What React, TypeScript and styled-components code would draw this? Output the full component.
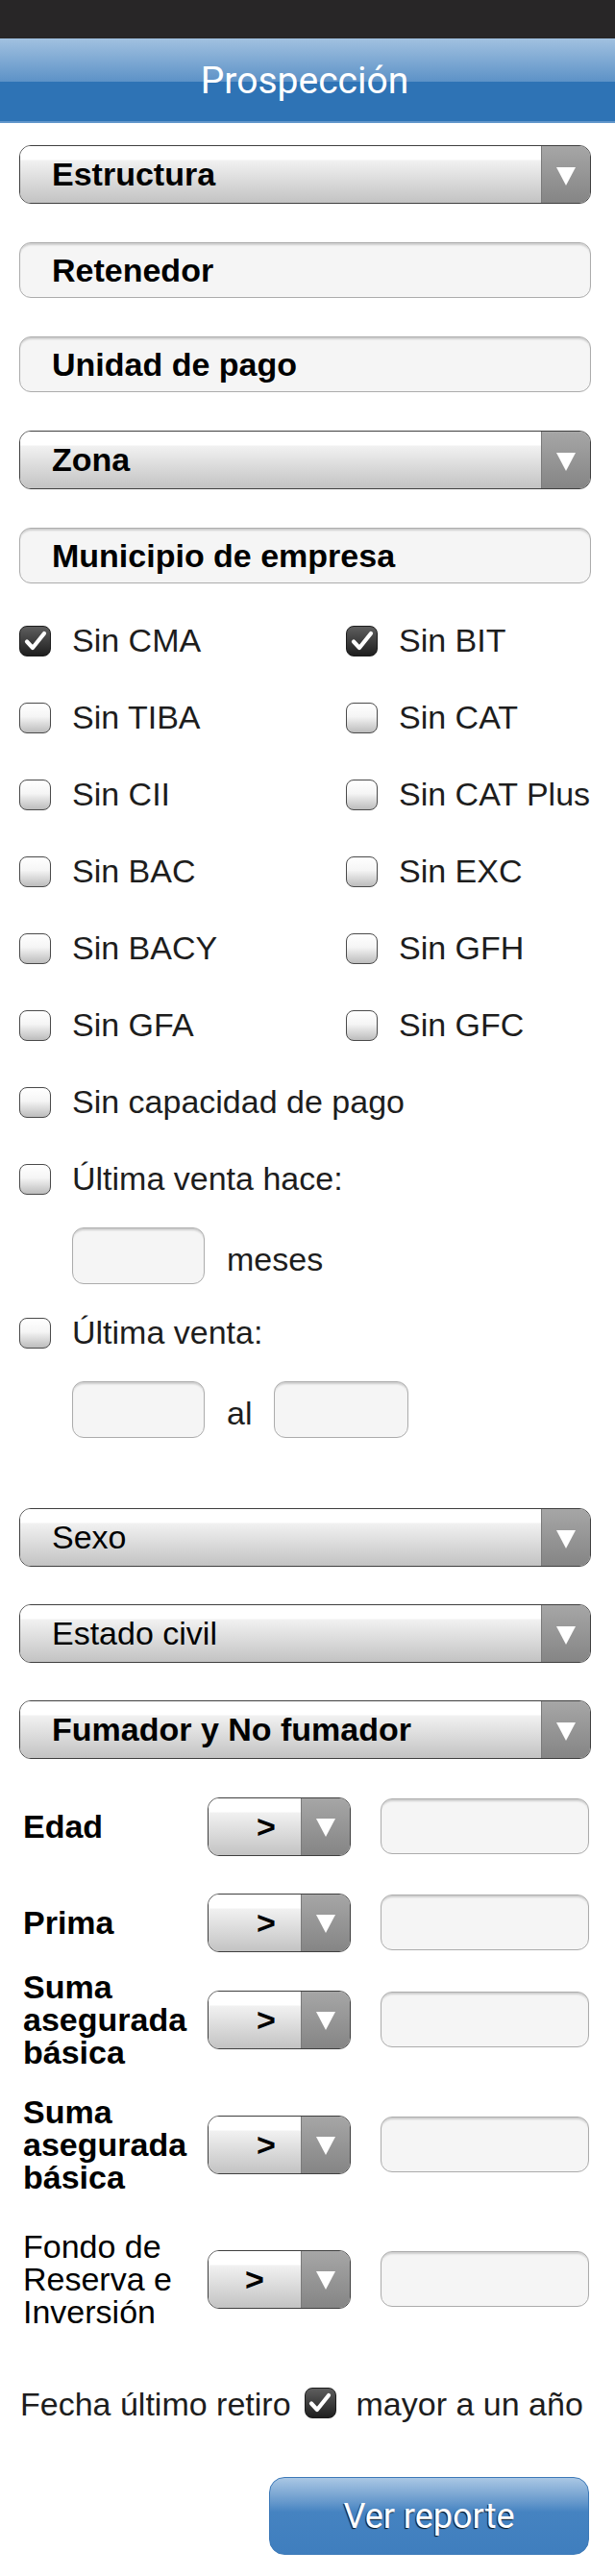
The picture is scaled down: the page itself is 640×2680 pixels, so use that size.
import React from "react";
import styled, { createGlobalStyle } from "styled-components";

const GlobalStyle = createGlobalStyle`
  * { box-sizing: border-box; }
  body {
    margin: 0;
    background: #fff;
    font-family: "Liberation Sans", Arial, sans-serif;
    color: #1d1d1d;
  }
`;

const Page = styled.div`
  width: 640px;
  padding-bottom: 23px;
`;

const StatusBar = styled.div`
  height: 40px;
  background: #282627;
`;

const Header = styled.header`
  height: 88px;
  display: flex;
  align-items: center;
  justify-content: center;
  background: linear-gradient(
    #a1c1e0 0px,
    #5d92c7 45px,
    #2e73b5 45px,
    #2e73b5 86px,
    #6196cb 86px
  );
`;

const Title = styled.h1`
  margin: 0 0 0 -6px;
  font: 400 39px Roboto, "Liberation Sans", sans-serif;
  color: #fff;
`;

const Form = styled.div`
  display: flex;
  flex-direction: column;
  padding: 23px 25px 0 20px;
`;

const FieldStack = styled.div<{ $top?: number; $gap: number }>`
  display: flex;
  flex-direction: column;
  gap: ${(p) => p.$gap}px;
  margin-top: ${(p) => p.$top ?? 0}px;
`;

/* selects */
const SelectShell = styled.div<{ $width?: number }>`
  display: flex;
  flex: none;
  height: 61px;
  width: ${(p) => (p.$width ? `${p.$width}px` : "100%")};
  border: 1px solid #3f3f3f;
  border-radius: 12px;
  overflow: hidden;
`;

const SelectFace = styled.div<{ $bold?: boolean; $center?: boolean; $pad: number }>`
  flex: 1;
  display: flex;
  align-items: center;
  justify-content: ${(p) => (p.$center ? "center" : "flex-start")};
  padding-left: ${(p) => p.$pad}px;
  font-size: 34px;
  font-weight: ${(p) => (p.$bold ? 700 : 400)};
  color: #000;
  background: linear-gradient(#fff 0, #fff 14px, #f1f1f1 15px, #c3c3c3 100%);
`;

const SelectArrow = styled.div`
  width: 51px;
  flex: none;
  display: flex;
  align-items: center;
  justify-content: center;
  padding-top: 3px;
  border-left: 1px solid #7a7a7a;
  background: linear-gradient(#a6a6a6, #858585);
  &::after {
    content: "";
    border-left: 10.5px solid transparent;
    border-right: 10.5px solid transparent;
    border-top: 19px solid #fff;
  }
`;

const Select = ({ label, bold }: { label: string; bold?: boolean }) => (
  <SelectShell>
    <SelectFace $bold={bold} $pad={33}>
      {label}
    </SelectFace>
    <SelectArrow />
  </SelectShell>
);

const OpSelect = ({ pad }: { pad: number }) => (
  <SelectShell $width={149}>
    <SelectFace $bold $center $pad={pad}>
      &gt;
    </SelectFace>
    <SelectArrow />
  </SelectShell>
);

/* text fields */
const TextField = styled.div<{ $width?: number; $h?: number }>`
  display: flex;
  align-items: center;
  flex: none;
  width: ${(p) => (p.$width ? `${p.$width}px` : "100%")};
  height: ${(p) => p.$h ?? 58}px;
  padding-left: 33px;
  border: 1px solid #acacac;
  border-radius: 12px;
  background: #f5f5f5;
  box-shadow: inset 0 3px 2px -1px rgba(0, 0, 0, 0.16);
  font-size: 34px;
  font-weight: 700;
  color: #000;
`;

/* checkboxes */
const Box = styled.span<{ $checked?: boolean }>`
  width: 33px;
  height: 32px;
  flex: none;
  display: flex;
  align-items: center;
  justify-content: center;
  border-radius: 8px;
  border: 1.5px solid ${(p) => (p.$checked ? "#1c1c1c" : "#4a4a4a")};
  background: ${(p) =>
    p.$checked
      ? "linear-gradient(#5e5e5e, #1e1e1e)"
      : "linear-gradient(#fff 0%, #f5f5f5 45%, #bcbcbc 100%)"};
`;

const Check = ({ checked }: { checked?: boolean }) => (
  <Box $checked={checked}>
    {checked && (
      <svg width="26" height="24" viewBox="0 0 26 24">
        <polyline
          points="4,12.5 10,19 22,4"
          fill="none"
          stroke="#fff"
          strokeWidth="4.2"
          strokeLinecap="round"
          strokeLinejoin="round"
        />
      </svg>
    )}
  </Box>
);

const CheckItem = styled.label<{ $top?: number }>`
  display: flex;
  align-items: center;
  gap: 22px;
  height: 33px;
  margin-top: ${(p) => p.$top ?? 0}px;
  font-size: 34px;
  white-space: nowrap;
`;

const CheckGrid = styled.div`
  display: grid;
  grid-template-columns: 340px 1fr;
  row-gap: 47px;
  margin-top: 43px;
`;

const SubRow = styled.div`
  display: flex;
  align-items: center;
  gap: 23px;
  margin-top: 34px;
  padding-left: 55px;
  font-size: 34px;
`;

const SubText = styled.span`
  padding-top: 8px;
`;

/* comparison rows */
const CompareRow = styled.div<{ $top?: number }>`
  display: grid;
  grid-template-columns: 192px 149px 217px;
  column-gap: 0;
  align-items: center;
  min-height: 100px;
  margin-top: ${(p) => p.$top ?? 0}px;
  padding-left: 4px;
`;

const CompareLabel = styled.div<{ $bold?: boolean }>`
  font-size: 34px;
  line-height: 34px;
  font-weight: ${(p) => (p.$bold ? 700 : 400)};
  color: #000;
  padding-right: 8px;
`;

const CompareInput = styled(TextField)`
  margin-left: 31px;
  width: 217px;
`;

const RetiroRow = styled.div`
  display: flex;
  align-items: center;
  height: 33px;
  margin-top: 61px;
  padding-left: 1px;
  font-size: 34px;
  white-space: nowrap;
`;

const RetiroText = styled.span<{ $before?: number; $after?: number }>`
  margin-left: ${(p) => p.$before ?? 0}px;
  margin-right: ${(p) => p.$after ?? 0}px;
  padding-top: 4px;
`;

const ReportButton = styled.button`
  align-self: flex-end;
  width: 333px;
  height: 81px;
  margin: 61px 2px 0 0;
  border: 1px solid #3c79b8;
  border-radius: 16px;
  background: linear-gradient(
    #aac7e4 0%,
    #6a9bcd 30%,
    #4583c1 45%,
    #3f7ebe 100%
  );
  color: #fff;
  font: 400 36px Roboto, "Liberation Sans", sans-serif;
  text-shadow: -1px 1px 1px rgba(0, 0, 0, 0.85);
  cursor: pointer;
`;

const gridItems: [string, boolean][] = [
  ["Sin CMA", true],
  ["Sin BIT", true],
  ["Sin TIBA", false],
  ["Sin CAT", false],
  ["Sin CII", false],
  ["Sin CAT Plus", false],
  ["Sin BAC", false],
  ["Sin EXC", false],
  ["Sin BACY", false],
  ["Sin GFH", false],
  ["Sin GFA", false],
  ["Sin GFC", false],
];

const compareRows = [
  { label: "Edad", bold: true, top: 20, pad: 24 },
  { label: "Prima", bold: true, top: 0, pad: 24 },
  { label: "Suma asegurada básica", bold: true, top: 0, pad: 24 },
  { label: "Suma asegurada básica", bold: true, top: 28, pad: 24 },
  { label: "Fondo de Reserva e Inversión", bold: false, top: 38, pad: 0 },
];

export default function App() {
  return (
    <>
      <GlobalStyle />
      <Page>
        <StatusBar />
        <Header>
          <Title>Prospección</Title>
        </Header>
        <Form>
          <FieldStack $gap={40}>
            <Select label="Estructura" bold />
            <TextField>Retenedor</TextField>
            <TextField>Unidad de pago</TextField>
            <Select label="Zona" bold />
            <TextField>Municipio de empresa</TextField>
          </FieldStack>

          <CheckGrid>
            {gridItems.map(([label, checked]) => (
              <CheckItem key={label}>
                <Check checked={checked} />
                {label}
              </CheckItem>
            ))}
          </CheckGrid>

          <CheckItem $top={47}>
            <Check />
            Sin capacidad de pago
          </CheckItem>
          <CheckItem $top={47}>
            <Check />
            Última venta hace:
          </CheckItem>
          <SubRow>
            <TextField $width={138} $h={59} />
            <SubText>meses</SubText>
          </SubRow>
          <CheckItem $top={34}>
            <Check />
            Última venta:
          </CheckItem>
          <SubRow>
            <TextField $width={138} $h={59} />
            <SubText>al</SubText>
            <TextField $width={140} $h={59} />
          </SubRow>

          <FieldStack $gap={39} $top={73}>
            <Select label="Sexo" />
            <Select label="Estado civil" />
            <Select label="Fumador y No fumador" bold />
          </FieldStack>

          {compareRows.map((r, i) => (
            <CompareRow key={i} $top={r.top}>
              <CompareLabel $bold={r.bold}>{r.label}</CompareLabel>
              <OpSelect pad={r.pad} />
              <CompareInput />
            </CompareRow>
          ))}

          <RetiroRow>
            <RetiroText $after={14}>Fecha último retiro</RetiroText>
            <Check checked />
            <RetiroText $before={21}>mayor a un año</RetiroText>
          </RetiroRow>

          <ReportButton>Ver reporte</ReportButton>
        </Form>
      </Page>
    </>
  );
}
